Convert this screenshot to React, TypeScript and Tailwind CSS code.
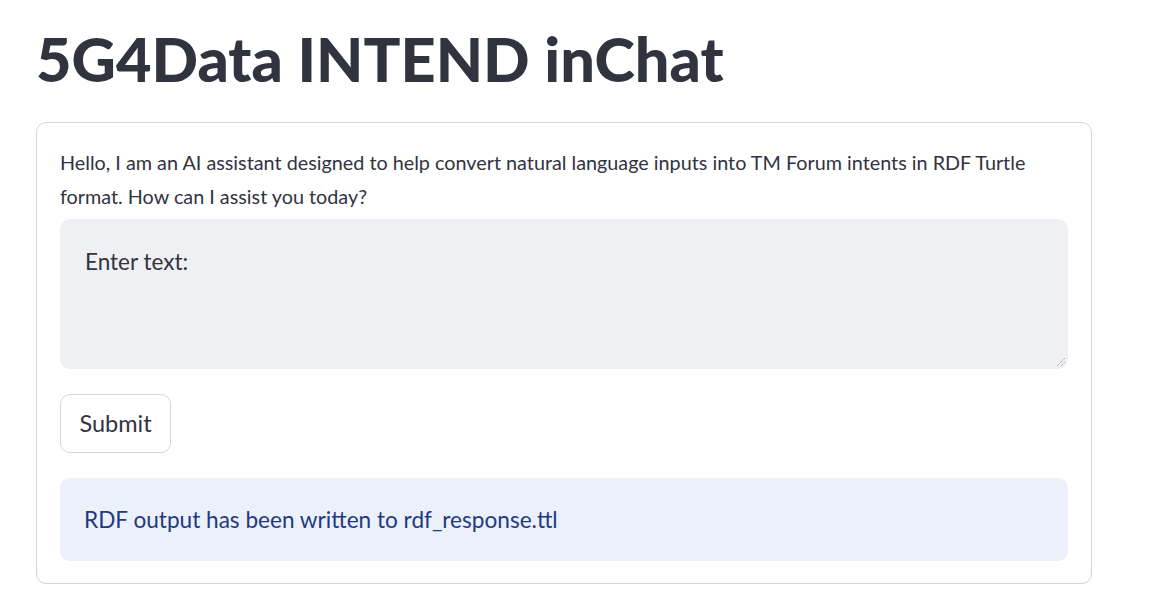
import React from 'react';

const font = { fontFamily: 'Lato, "Noto Sans", sans-serif' };

const App: React.FC = () => {
  return (
    <div className="min-h-screen bg-white text-[#31333f]" style={font}>
      <div className="w-[1056px] pl-[36px] box-content">
        <h1 className="pt-[22px] h-[122px] text-[61.3px] font-black leading-[72px] text-[#31333f]">
          5G4Data INTEND inChat
        </h1>

        <div className="rounded-[10px] border border-[#d6d6d9] px-[23px] pt-[22px] pb-[22px]">
          <p className="text-[19.8px] leading-[34px]">
            Hello, I am an AI assistant designed to help convert natural language inputs into TM Forum intents in RDF Turtle format. How can I assist you today?
          </p>

          <div className="mt-[6px] h-[150px] rounded-[10px] bg-[#eff0f4] px-[25px] pt-[26px] relative">
            <span className="text-[22.5px] leading-[34px] text-[#31333f]">Enter text:</span>
            <svg className="absolute right-[2px] bottom-[2px]" width="10" height="10" viewBox="0 0 10 10">
              <path d="M1 9 L9 1 M5 9 L9 5" stroke="#8a8a90" strokeWidth="1" strokeDasharray="1 1" />
            </svg>
          </div>

          <button className="mt-[25px] h-[59px] w-[111px] rounded-[10px] border border-[#d6d6d9] bg-white text-[23.5px] text-[#31333f]">
            Submit
          </button>

          <div className="mt-[25px] flex h-[83px] items-center rounded-[10px] bg-[#ebf0fb] px-[24px]">
            <span className="text-[22.6px] text-[#1f3a80]">RDF output has been written to rdf_response.ttl</span>
          </div>
        </div>
      </div>
    </div>
  );
};

export default App;
